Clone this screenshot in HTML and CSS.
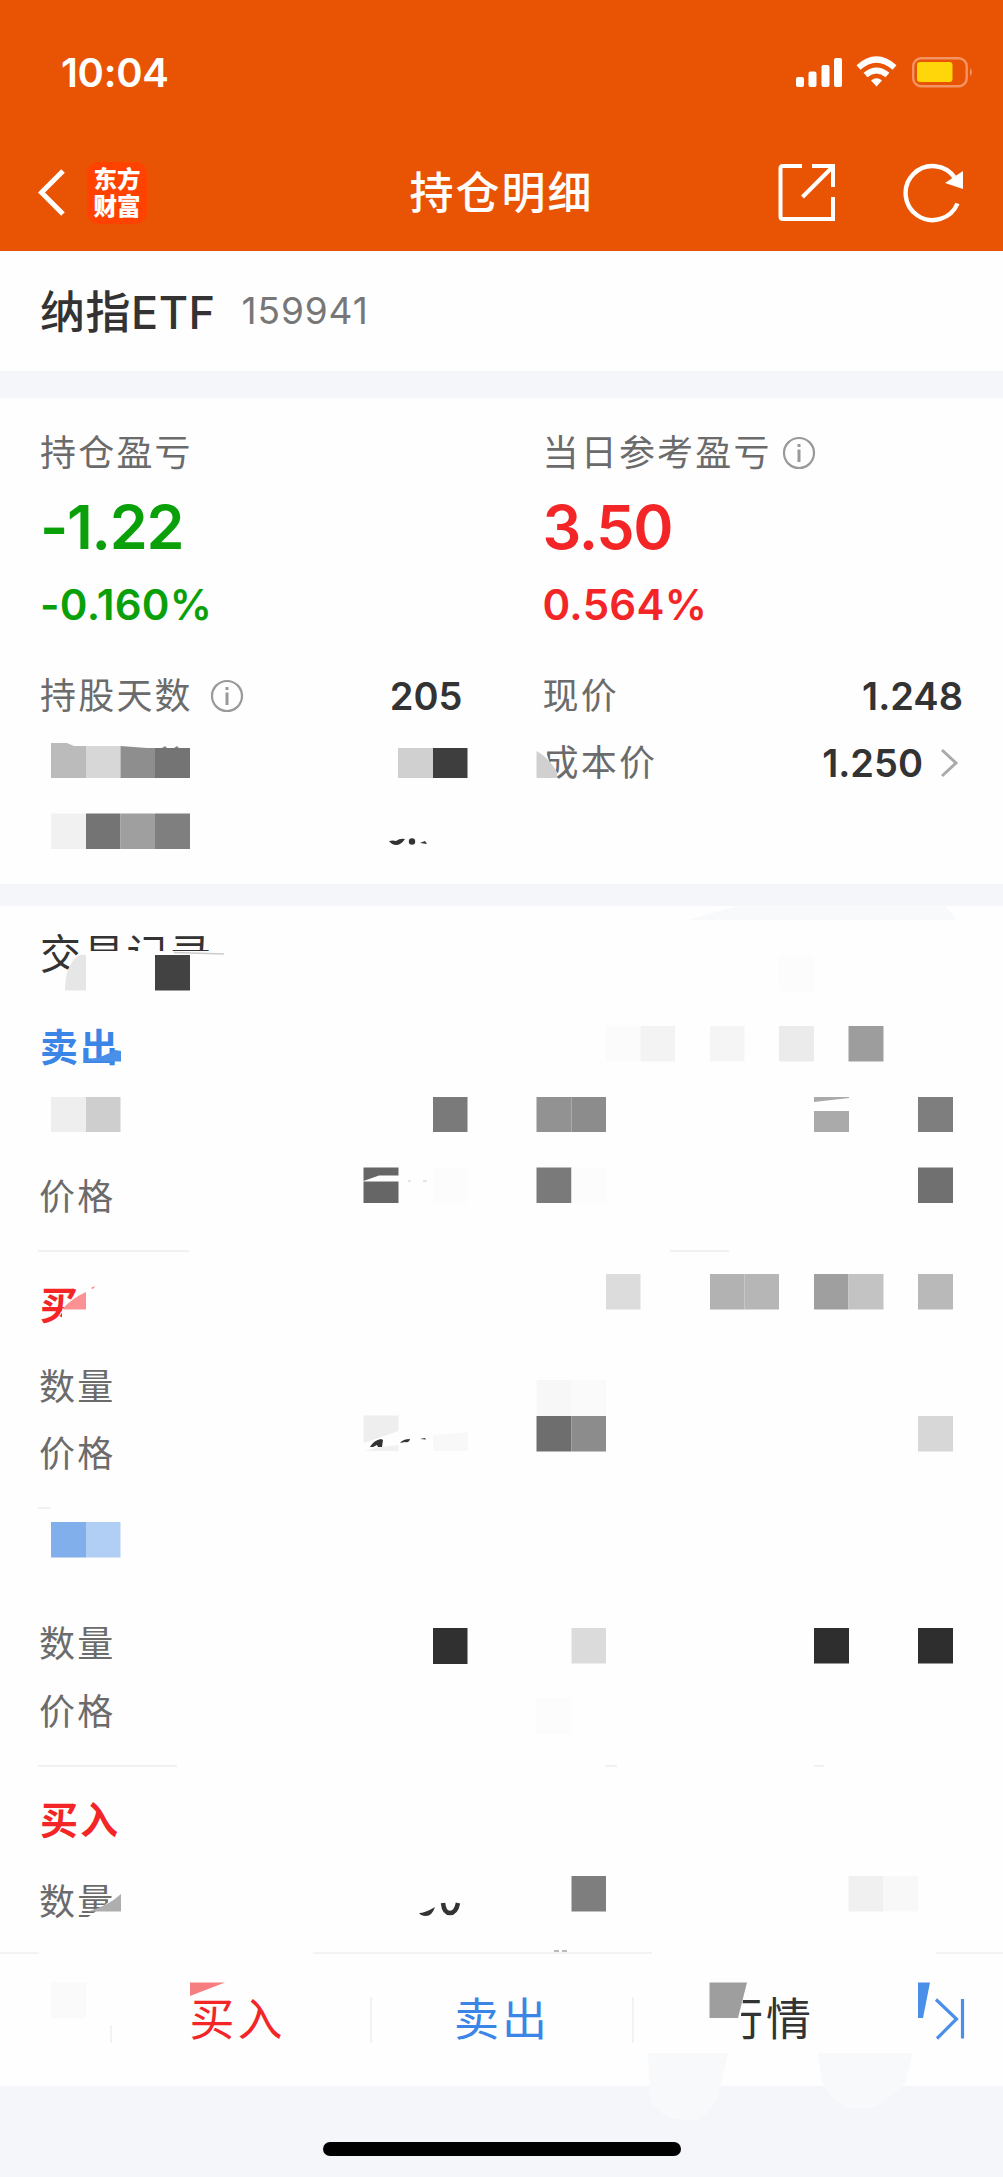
FILE: index.html
```
<!DOCTYPE html>
<html lang="zh-CN">
<head>
  <meta charset="UTF-8">
  <meta name="viewport" content="width=device-width, initial-scale=1.0">
  <title>持仓明细</title>
  <link rel="stylesheet" href="styles.css">
</head>
<body>
  <div class="page">
    <header class="header">
      <div class="status-bar">
        <span class="time">10:04</span>
        <svg class="status-icons" width="180" height="34" viewBox="0 0 180 34">
          <g fill="#fff">
            <rect x="0" y="22" width="8" height="10" rx="2"/>
            <rect x="12.5" y="16.500" width="8" height="15.500" rx="2"/>
            <rect x="25.500" y="10" width="8" height="22" rx="2"/>
            <rect x="38" y="3" width="8" height="29" rx="2"/>
            <path d="M80.500 31.500l-5.500-6q5.500-4.500 11 0z"/>
          </g>
          <g fill="none" stroke="#fff" stroke-width="6">
            <path d="M62.500 12.500q18-16 36 0"/>
            <path d="M69.500 20q11-9 22 0"/>
          </g>
          <rect x="117.200" y="3.200" width="53.500" height="28" rx="8" fill="none" stroke="#f39465" stroke-width="2.400"/>
          <rect x="121" y="7" width="35.500" height="20" rx="3" fill="#ffd60a"/>
          <path d="M174 13q4 4.200 0 8.500z" fill="#f39465"/>
        </svg>
      </div>
      <div class="nav-bar">
        <div class="nav-left">
          <svg width="28" height="50" viewBox="0 0 28 50">
            <path d="M25 3L3.500 24.500 25 46" fill="none" stroke="#fff" stroke-width="5"/>
          </svg>
          <div class="logo">
            <div>东方</div>
            <div>财富</div>
          </div>
        </div>
        <h1 class="nav-title">持仓明细</h1>
        <div class="nav-right">
          <svg width="58" height="58" viewBox="0 0 58 58" fill="none" stroke="#fff" stroke-width="4">
            <path d="M24 3H5q-2.500 0-2.500 2.500V53.500q0 2.500 2.500 2.500H55V34"/>
            <path d="M34 3H55V24M54.500 4L24.500 34"/>
          </svg>
          <svg width="60" height="60" viewBox="0 0 60 60">
            <path d="M54.500 40.500A27 27 0 1 1 52 15" fill="none" stroke="#fff" stroke-width="4.400"/>
            <path d="M60 8V26L42 20z" fill="#fff"/>
          </svg>
        </div>
      </div>
    </header>

    <section class="stock">
      <span class="stock-name">纳指ETF</span>
      <span class="stock-code">159941</span>
    </section>

    <section class="summary">
      <div class="column">
        <div class="label">持仓盈亏</div>
        <div class="amount green">-1.22</div>
        <div class="percent green">-0.160%</div>
        <div class="row">
          <span class="label">持股天数</span>
          <svg class="info info-days" width="34" height="34" viewBox="0 0 34 34">
            <circle cx="17" cy="17" r="15" fill="none" stroke="#999" stroke-width="2.200"/>
            <path d="M17 13.500V26M17 8V11" stroke="#999" stroke-width="3"/>
          </svg>
          <span class="value value-days">205</span>
        </div>
      </div>
      <div class="column">
        <div class="label label-info">当日参考盈亏
          <svg class="info" width="34" height="34" viewBox="0 0 34 34">
            <circle cx="17" cy="17" r="15" fill="none" stroke="#999" stroke-width="2.200"/>
            <path d="M17 13.500V26M17 8V11" stroke="#999" stroke-width="3"/>
          </svg>
        </div>
        <div class="amount red">3.50</div>
        <div class="percent red">0.564%</div>
        <div class="row">
          <span class="label">现价</span>
          <span class="value">1.248</span>
        </div>
        <div class="row">
          <span class="label">成本价</span>
          <span class="value">1.250</span>
          <svg class="arrow" width="20" height="32" viewBox="0 0 20 32">
            <path d="M2 3L16 16 2 29" fill="none" stroke="#aaa" stroke-width="3"/>
          </svg>
        </div>
      </div>
    </section>

    <section class="records">
      <h2 class="records-title">交易记录</h2>
      <div class="trade">
        <div class="side blue">卖出</div>
        <div class="trade-row"></div>
        <div class="trade-row">价格</div>
      </div>
      <div class="trade">
        <div class="side red">买</div>
        <div class="trade-row">数量</div>
        <div class="trade-row">价格</div>
      </div>
      <div class="trade">
        <div class="side"></div>
        <div class="trade-row">数量</div>
        <div class="trade-row">价格</div>
      </div>
      <div class="trade">
        <div class="side red">买入</div>
        <div class="trade-row">数量</div>
      </div>
    </section>

    <nav class="tab-bar">
      <div class="tab tab-first"></div>
      <div class="tab tab-buy red">买入</div>
      <div class="tab tab-sell blue">卖出</div>
      <div class="tab tab-quote">行情</div>
      <div class="tab tab-more">
        <svg width="32" height="44" viewBox="0 0 32 44">
          <path d="M2 2.500L22.500 22 3 41.500M28.500 2V41.500" fill="none" stroke="#4a8fe8" stroke-width="3.200"/>
        </svg>
      </div>
    </nav>

    <footer class="footer">
      <div class="home-indicator"></div>
    </footer>

    <!-- privacy mosaic over the private numbers -->
    <svg class="mosaic" width="1003" height="2177" viewBox="0 0 1003 2177">
      <!-- erased areas -->
      <g fill="#fefefe">
        <path d="M84 951H218V992H64V985L66 972 80 954z"/>
        <path d="M189 1248H670V1255H189zM729 1248H970V1255H729z"/>
        <path d="M51 1506H970V1512H51z"/>
        <path d="M177 1763H605V1770H177zM617 1763H814V1770H617zM824 1763H970V1770H824z"/>
        <path d="M62 1309L88 1291V1330H62z"/>
        <path d="M88 1917L121 1893V1922H88z"/>
        <path d="M39 1949H313V1955H39zM652 1949H936V1955H652z"/>
        <path d="M106 1990H116V2025H106z"/>
        <path d="M705 1985H745L737 2046H705z"/>
        <path d="M536 740L547 755 556 780H536z"/>
      </g>
      <g fill="#f7f9fb">
        <path d="M688 920L742 905H945L956 920z"/>
        <path d="M648 2053H728L720 2089Q715 2112 696 2120 660 2122 650 2100z"/>
        <path d="M818 2053H913L905 2083Q890 2100 872 2108H848Q828 2098 822 2081z"/>
      </g>

      <path d="M51 743H67L74 746H86V778H51z" fill="#bbb"/>
      <rect x="86" y="746" width="34.500" height="32" fill="#d7d7d7"/>
      <path d="M120.500 746L147 748H155V778H120.500z" fill="#8e8e8e"/>
      <rect x="155" y="748" width="35" height="30" fill="#747474"/>
      <path d="M162 748l3-2 2 2zM174 748l3-2 2 2z" fill="#888"/>
      <rect x="398" y="748" width="35" height="30" fill="#d0d0d0"/>
      <rect x="433" y="748" width="34.500" height="30" fill="#3e3e3e"/>
      <path d="M536.500 751Q549 758 557 772V778H536.500z" fill="#d0d0d0"/>
      <rect x="51" y="813.500" width="35" height="35.500" fill="#f1f1f1"/>
      <rect x="86" y="813.500" width="34.500" height="35.500" fill="#747474"/>
      <rect x="120.500" y="813.500" width="34.500" height="35.500" fill="#9f9f9f"/>
      <rect x="155" y="813.500" width="35" height="35.500" fill="#7f7f7f"/>
      <path d="M389 841q4-1 7 0 4-3 9-2-4 6-9 6-4 0-7-4zM420 843l5-2 2 3z" fill="#333"/>
      <circle cx="412" cy="841.500" r="3.200" fill="#333"/>

      <path d="M65 990.500Q65 965 79 955H86V990.500z" fill="#e6e6e6"/>
      <rect x="155" y="955" width="35" height="35.500" fill="#424242"/>
      <path d="M174 952.500L224 954" stroke="#ccc" stroke-width="1.500"/>
      <rect x="779" y="955" width="35" height="36" fill="#fcfcfc"/>

      <path d="M83 1061Q105 1057 115 1050L121 1051V1061.500H83z" fill="#4a8fe8"/>
      <rect x="606" y="1026" width="34.500" height="35.500" fill="#fbfbfb"/>
      <rect x="640.500" y="1026" width="34.500" height="35.500" fill="#f3f3f3"/>
      <rect x="710" y="1026" width="34.500" height="35.500" fill="#f5f5f5"/>
      <rect x="779" y="1026" width="35" height="35.500" fill="#ebebeb"/>
      <rect x="848.500" y="1026" width="35" height="35.500" fill="#9d9d9d"/>

      <rect x="51" y="1097" width="35" height="35" fill="#eee"/>
      <rect x="86" y="1097" width="34.500" height="35" fill="#cecece"/>
      <rect x="433" y="1097" width="34.500" height="35" fill="#7a7a7a"/>
      <rect x="536.500" y="1097" width="35" height="35" fill="#929292"/>
      <rect x="571.500" y="1097" width="34.500" height="35" fill="#8c8c8c"/>
      <path d="M814 1097H849V1098L814 1102z" fill="#aaa"/>
      <rect x="814" y="1111" width="35" height="21" fill="#aaa"/>
      <rect x="918" y="1097" width="35" height="35" fill="#7e7e7e"/>

      <path d="M363.500 1167.500H398.500V1175.500H379L363.500 1181z" fill="#666"/>
      <rect x="363.500" y="1181.500" width="35" height="21.500" fill="#666"/>
      <path d="M408 1181h3M423 1181h4M447 1181h5" stroke="#ddd" stroke-width="1.500"/>
      <rect x="433" y="1167.500" width="34.500" height="35.500" fill="#fcfcfc"/>
      <rect x="536.500" y="1167.500" width="35" height="35.500" fill="#7a7a7a"/>
      <rect x="571.500" y="1167.500" width="34.500" height="35.500" fill="#fcfcfc"/>
      <rect x="918" y="1167.500" width="35" height="35.500" fill="#707070"/>

      <path d="M62 1309.500Q72 1298 86 1292V1309.500z" fill="#fb9193"/>
      <path d="M91 1288l4-2-2 3z" fill="#f77"/>
      <rect x="606" y="1274" width="34.500" height="35.500" fill="#dcdcdc"/>
      <rect x="710" y="1274" width="34.500" height="35.500" fill="#b2b2b2"/>
      <rect x="744.500" y="1274" width="34.500" height="35.500" fill="#b6b6b6"/>
      <rect x="814" y="1274" width="34.500" height="35.500" fill="#9f9f9f"/>
      <rect x="848.500" y="1274" width="35" height="35.500" fill="#c3c3c3"/>
      <rect x="918" y="1274" width="35" height="35.500" fill="#b9b9b9"/>

      <rect x="536.500" y="1380" width="35" height="36" fill="#f7f7f7"/>
      <rect x="571.500" y="1380" width="34.500" height="36" fill="#fafafa"/>
      <path d="M363.500 1415.500H398.500V1431L363.500 1443z" fill="#eee"/>
      <path d="M364 1451L380 1447 398.500 1445V1451z" fill="#f1f1f1"/>
      <path d="M370 1447q4-7 11-8l2 1-1 7h-4l-1-2-4 2zM400 1443q3-4 10-4-1 4-5 3zM420 1439l5-1 1 1.500z" fill="#333"/>
      <path d="M433 1435L468 1432V1451H433z" fill="#f8f8f8"/>
      <rect x="536.500" y="1416" width="35" height="35.500" fill="#6e6e6e"/>
      <rect x="571.500" y="1416" width="34.500" height="35.500" fill="#8c8c8c"/>
      <rect x="918" y="1416" width="35" height="35.500" fill="#d7d7d7"/>

      <rect x="51" y="1522" width="35" height="35.500" fill="#80afec"/>
      <rect x="86" y="1522" width="34.500" height="35.500" fill="#b1cff5"/>

      <rect x="433" y="1628" width="34.500" height="36" fill="#303030"/>
      <rect x="571.500" y="1628" width="34.500" height="35.500" fill="#dbdbdb"/>
      <rect x="814" y="1628" width="35" height="35.500" fill="#2e2e2e"/>
      <rect x="918" y="1628" width="35" height="35.500" fill="#2e2e2e"/>
      <rect x="536.500" y="1698" width="35" height="36" fill="#fcfcfc"/>

      <path d="M88 1911.500Q108 1906 121 1894V1911.500z" fill="#aeaeae"/>
      <path d="M419 1913q6 0 16-6-3 9-9 9-5 0-7-3z" fill="#333"/>
      <path d="M443 1903q1 10 7 10 6 0 8-10" fill="none" stroke="#333" stroke-width="4.500"/>
      <rect x="571.500" y="1876" width="34.500" height="35.500" fill="#7e7e7e"/>
      <rect x="848.500" y="1876" width="35" height="35.500" fill="#f0f0f0"/>
      <rect x="883.500" y="1876" width="34.500" height="35.500" fill="#f8f8f8"/>
      <path d="M554 1951h5M562 1951h5" stroke="#bbb" stroke-width="2"/>

      <rect x="51" y="1982.500" width="35" height="35.500" fill="#fafafa"/>
      <path d="M190 1982.500H225L190 1996z" fill="#f77e80"/>
      <path d="M709.500 1982.500H747L738 2018H709.500z" fill="#9e9e9e"/>
      <path d="M918 1982.500H930L923 2018H918z" fill="#4a8fe8"/>
    </svg>
  </div>
</body>
</html>
```
FILE: styles.css
```
* {
  box-sizing: border-box;
}

body {
  margin: 0;
  background-color: #f5f6f9;
  color: #333;
  font-family: Inter, 'Noto Sans CJK SC', sans-serif;
}

svg {
  display: block;
  flex-shrink: 0;
}

.page {
  position: relative;
  width: 1003px;
  height: 2177px;
  overflow: hidden;
}

.red {
  color: #f32526;
}

.green {
  color: #0aa00a;
}

.blue {
  color: #3a85e6;
}

/* header */
.header {
  height: 251px;
  background-color: #e95404;
  color: white;
}

.status-bar {
  display: flex;
  justify-content: space-between;
  height: 142px;
  padding: 55px 27px 0 61px;
}

.time {
  font-size: 40px;
  font-weight: 600;
  line-height: 36px;
  letter-spacing: -0.3px;
}

.nav-bar {
  display: grid;
  grid-template-columns: 1fr 200px 1fr;
  align-items: center;
  height: 101px;
}

.nav-left {
  display: flex;
  align-items: center;
  gap: 21px;
  padding-left: 38px;
}

.logo {
  width: 60px;
  height: 62px;
  padding-top: 3px;
  border-radius: 12px;
  background-color: #ff4200;
  font-family: 'Noto Sans CJK SC', sans-serif;
  font-size: 23.5px;
  font-weight: 900;
  line-height: 27px;
  text-align: center;
}

.nav-title {
  margin: 0;
  font-size: 44px;
  font-weight: 500;
  line-height: 60px;
  letter-spacing: 2px;
  text-align: center;
}

.nav-right {
  display: flex;
  justify-content: flex-end;
  gap: 67px;
  padding-right: 40px;
}

/* stock name */
.stock {
  display: flex;
  align-items: center;
  height: 120px;
  padding-left: 40px;
  padding-bottom: 4px;
  background-color: #fefefe;
}

.stock-name {
  font-size: 45px;
  font-weight: 500;
  letter-spacing: 0.5px;
}

.stock-code {
  margin-left: 26px;
  padding-top: 2px;
  color: #777;
  font-size: 37px;
  letter-spacing: 0.9px;
}

/* profit summary */
.summary {
  display: flex;
  gap: 82px;
  height: 486px;
  margin-top: 27px;
  padding: 25px 40px 0;
  background-color: #fefefe;
}

.column {
  width: 421px;
}

.label {
  color: #6b6b6b;
  font-size: 36px;
  line-height: 60px;
  letter-spacing: 2.2px;
}

.label-info {
  display: flex;
  align-items: center;
  gap: 10px;
}

.amount {
  font-size: 61px;
  font-weight: 600;
  line-height: 88px;
  letter-spacing: -1.3px;
}

.percent {
  font-size: 42px;
  font-weight: 600;
  line-height: 67px;
  letter-spacing: 0.3px;
}

.row {
  display: flex;
  align-items: center;
  height: 67px;
}

.percent + .row {
  margin-top: 24px;
}

.info-days {
  margin-left: 17px;
}

.value {
  margin-left: auto;
  font-size: 38px;
  font-weight: 600;
}

.value-days {
  margin-right: -2px;
}

.arrow {
  margin-left: 17px;
  margin-right: 3px;
}

/* trade records */
.records {
  height: 1046px;
  margin-top: 22px;
  background-color: #fefefe;
}

.records-title {
  height: 88px;
  margin: 0;
  padding-left: 40px;
  font-size: 41px;
  font-weight: 400;
  line-height: 96px;
  letter-spacing: 2.3px;
}

.trade {
  height: 257.7px;
  margin: 0 40px 0 38px;
  padding-top: 20px;
  border-bottom: 2px solid #f1f1f1;
}

.trade:last-child {
  height: auto;
  border-bottom: none;
}

.side {
  height: 81px;
  padding-left: 2px;
  font-size: 38px;
  font-weight: 700;
  line-height: 66px;
  letter-spacing: 2px;
}

.trade-row {
  height: 67.5px;
  padding-left: 1px;
  color: #6b6b6b;
  font-size: 36px;
  line-height: 68px;
  letter-spacing: 2.2px;
}

/* bottom tabs */
.tab-bar {
  display: flex;
  align-items: center;
  height: 134px;
  border-top: 2px solid #f3f3f3;
  background-color: #fefefe;
}

.tab {
  height: 46px;
  border-right: 2px solid #f2f2f2;
  font-size: 45px;
  line-height: 46px;
  letter-spacing: 3px;
  text-align: center;
}

.tab-first {
  width: 112px;
}

.tab-buy {
  width: 260px;
  padding-right: 7px;
}

.tab-sell {
  width: 262px;
}

.tab-quote {
  width: 264px;
  border-right: none;
}

.tab-more {
  width: 105px;
  padding-left: 36px;
  border-right: none;
}

.footer {
  padding-top: 56px;
}

.home-indicator {
  width: 358px;
  height: 14px;
  margin: 0 auto;
  border-radius: 7px;
  background-color: black;
}

.mosaic {
  position: absolute;
  top: 0;
  left: 0;
}
```
